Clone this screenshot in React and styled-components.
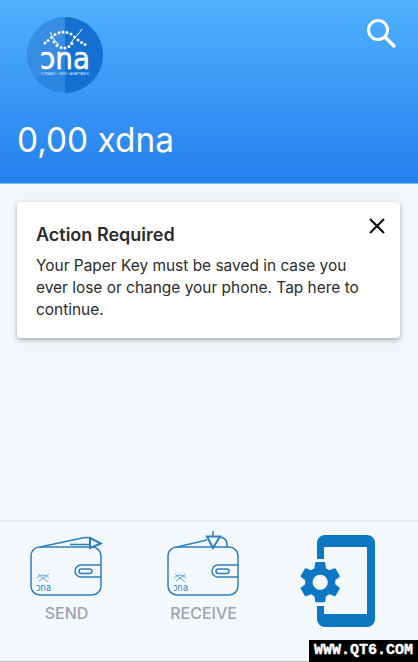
import React from "react";
import styled, { createGlobalStyle } from "styled-components";

const Global = createGlobalStyle`
  html, body { margin: 0; padding: 0; background: #f3f7fb; }
  * { box-sizing: border-box; }
  #root { width: 418px; height: 662px; overflow: hidden; }
`;
const Screen = styled.div`
  position: relative; width: 418px; height: 662px; display: flex; flex-direction: column;
  font-family: "Inter", "Liberation Sans", sans-serif; background: #f3f7fb;
`;
const Header = styled.header`
  height: 184px; flex: none; display: flex; flex-direction: column;
  padding: 17px 20px 0 17px;
  background: linear-gradient(180deg, #4fb1fe 0%, #2480ee 100%);
  border-bottom: 1px solid #7dbcf6;
`;
const TopRow = styled.div`
  display: flex; justify-content: space-between; align-items: flex-start; height: 94px; padding-left: 10px;
`;
const Balance = styled.div`
  margin-top: 9px; font-size: 33.4px; line-height: 40px; color: #fff;
`;
const Content = styled.main`
  flex: 1; padding: 18px 18px 0 17px;
`;
const Card = styled.section`
  position: relative; width: 383px; height: 136px; padding: 21px 19px; background: #fff; border-radius: 4px;
  box-shadow: 0 2px 5px rgba(40, 50, 60, 0.38);
  color: #2a2c2e;
`;
const CardTitle = styled.h2`
  margin: 0 0 8px; font-size: 18px; line-height: 24px; font-weight: 600;
`;
const CardText = styled.p`
  margin: 0; font-size: 15.45px; line-height: 22px; font-weight: 400; width: 340px;
`;
const Close = styled.svg`
  position: absolute; top: 15px; right: 14px;
`;
const Bar = styled.nav`
  height: 142px; flex: none; display: grid; grid-template-columns: 133px 141px 126px; padding-top: 8px;
  border-top: 2px solid #eaeef2; border-bottom: 1px solid #b9bcbf; background: #f3f8fc;
`;
const NavItem = styled.div`
  display: flex; flex-direction: column; align-items: center;
`;
const NavLabel = styled.span`
  margin-top: 7px; font-size: 16px; line-height: 20px; font-weight: 500; color: #9fa3a7;
`;
const DeviceSvg = styled.svg`
  margin: 5px 0 0 2px; fill: #0c78c3;
`;
const Watermark = styled.div`
  position: absolute; right: 0; bottom: 0; width: 109px; height: 22px; background: #000; color: #fff;
  display: flex; align-items: center; justify-content: center;
  font: 700 15px/22px "Liberation Mono", monospace; -webkit-text-stroke: 0.4px #fff; white-space: nowrap; overflow: hidden;
`;

const topDots = [[18,26],[21,23.5],[24.5,20.5],[28,17.5],[32,15.8],[36,15],[40,15.5],[44,17],[47.5,20],[51,23],[54.5,25.5],[58,27.5]];
const lowDots = [[27,25],[30,28.5],[34,30.5],[38,31],[42,29.5],[45,26.5]];

const Helix = () => (
  <g fill="#fff">
    <path d="M23 15 C25 20 28 24 32 28 M55 12 C52 17 47 21 43 27" stroke="#fff" strokeWidth="1" fill="none" />
    {[...topDots, ...lowDots].map(([x, y], i) => (
      <circle key={i} cx={x} cy={y} r="1.5" />
    ))}
  </g>
);

const Logo = () => (
  <svg width="76" height="76" viewBox="0 0 76 76">
    <circle cx="38" cy="38" r="38" fill="#2b86e2" />
    <path d="M38 0 A38 38 0 0 1 38 76 Z" fill="#1471d2" />
    <path d="M38 0 L38 40 L8 61 A38 38 0 0 1 6 18 A38 38 0 0 1 38 0Z" fill="#3d8fe5" opacity="0.7" />
    <Helix />
    <text x="38" y="52" textAnchor="middle" textLength="50" lengthAdjust="spacingAndGlyphs" fontFamily="DejaVu Sans" fontWeight="400" stroke="#fff" strokeWidth="0.6" fontSize="31" fill="#fff">ɔna</text>
    <text x="38" y="57.5" textAnchor="middle" textLength="48" lengthAdjust="spacingAndGlyphs" fontFamily="Liberation Sans" fontSize="3" fill="#dcecfb">DYNAMIC • NEW • ADAPTABLE</text>
  </svg>
);

const Search = () => (
  <svg width="32" height="34" viewBox="0 0 32 34" fill="none" stroke="#fff" strokeWidth="3" strokeLinecap="round">
    <circle cx="12" cy="13" r="9.5" />
    <path d="M19.5 20.5 L28 29" strokeWidth="3.5" />
  </svg>
);

const WalletBody = () => (
  <g fill="none" stroke="#2f7fbe" strokeWidth="1.5">
    <path d="M11 17 H62 A9 9 0 0 1 71 26 V56 A9 9 0 0 1 62 65 H10 A9 9 0 0 1 1 56 V26 A9 9 0 0 1 11 17 Z" />
    <path d="M71 35 H51 A6 6 0 0 0 51 47 H71" />
    <rect x="49" y="39" width="13" height="4.5" rx="2.2" />
    <g strokeWidth="0.7">
      <path d="M7 48 C11 44 15 44 19 48 M8 44 L18 52 M19 44 L9 51" />
    </g>
    <text x="6" y="61" textLength="15" lengthAdjust="spacingAndGlyphs" fontFamily="DejaVu Sans" fontWeight="400" fontSize="10" fill="#2f7fbe" stroke="none">ɔna</text>
  </g>
);

const SendIcon = () => (
  <svg width="73" height="66" viewBox="0 0 73 66">
    <WalletBody />
    <g fill="none" stroke="#2f7fbe" strokeWidth="1.5">
      <path d="M10 17 L50 8.5 Q56 7 60 8" />
      <path d="M40 14.5 H60" />
      <path d="M60 8 L71 13.5 L60 18 Z" strokeWidth="2" />
    </g>
  </svg>
);
const ReceiveIcon = () => (
  <svg width="73" height="66" viewBox="0 0 73 66">
    <WalletBody />
    <g fill="none" stroke="#2f7fbe" strokeWidth="1.5">
      <path d="M10 17 L40 10" />
      <path d="M40 6.5 H53 L46 18 Z" strokeWidth="2" />
      <path d="M46 1 V6" />
      <path d="M53 7 Q61 8 60 17" />
    </g>
  </svg>
);
const DeviceIcon = () => (
  <DeviceSvg width="76" height="93" viewBox="0 0 76 93">
    <path fillRule="evenodd" d="M25 0 H67 A8 8 0 0 1 75 8 V84 A8 8 0 0 1 67 92 H25 A8 8 0 0 1 17 84 V71 H24 V79 H67 V12 H24 V24 H17 V8 A8 8 0 0 1 25 0 Z" />
    <g transform="translate(-5 22) scale(2.1)">
      <path d="M19.14 12.94c.04-.3.06-.61.06-.94 0-.32-.02-.64-.07-.94l2.03-1.58c.18-.14.23-.41.12-.61l-1.92-3.32c-.12-.22-.37-.29-.59-.22l-2.39.96c-.5-.38-1.03-.7-1.62-.94l-.36-2.54c-.04-.24-.24-.41-.48-.41h-3.84c-.24 0-.43.17-.47.41l-.36 2.54c-.59.24-1.13.57-1.62.94l-2.39-.96c-.22-.08-.47 0-.59.22L2.74 8.87c-.12.21-.08.47.12.61l2.03 1.58c-.05.3-.07.62-.07.94s.02.64.07.94l-2.03 1.58c-.18.14-.23.41-.12.61l1.92 3.32c.12.22.37.29.59.22l2.39-.96c.5.38 1.03.7 1.62.94l.36 2.54c.05.24.24.41.48.41h3.84c.24 0 .44-.17.47-.41l.36-2.54c.59-.24 1.13-.56 1.62-.94l2.39.96c.22.08.47 0 .59-.22l1.92-3.32c.12-.22.07-.47-.12-.61l-2.01-1.58zM12 15.6c-1.98 0-3.6-1.62-3.6-3.6s1.62-3.6 3.6-3.6 3.6 1.62 3.6 3.6-1.62 3.6-3.6 3.6z" />
    </g>
  </DeviceSvg>
);

export default function App() {
  return (
    <Screen>
      <Global />
      <Header>
        <TopRow>
          <Logo />
          <Search />
        </TopRow>
        <Balance>0,00 xdna</Balance>
      </Header>
      <Content>
        <Card>
          <CardTitle>Action Required</CardTitle>
          <CardText>Your Paper Key must be saved in case you ever lose or change your phone. Tap here to continue.</CardText>
          <Close width="18" height="18" viewBox="0 0 18 18" stroke="#111" strokeWidth="2.2" fill="none">
            <path d="M2 2 L16 16 M16 2 L2 16" />
          </Close>
        </Card>
      </Content>
      <Bar>
        <NavItem><SendIcon /><NavLabel>SEND</NavLabel></NavItem>
        <NavItem><ReceiveIcon /><NavLabel>RECEIVE</NavLabel></NavItem>
        <NavItem><DeviceIcon /></NavItem>
      </Bar>
      <Watermark>WWW.QT6.COM</Watermark>
    </Screen>
  );
}
